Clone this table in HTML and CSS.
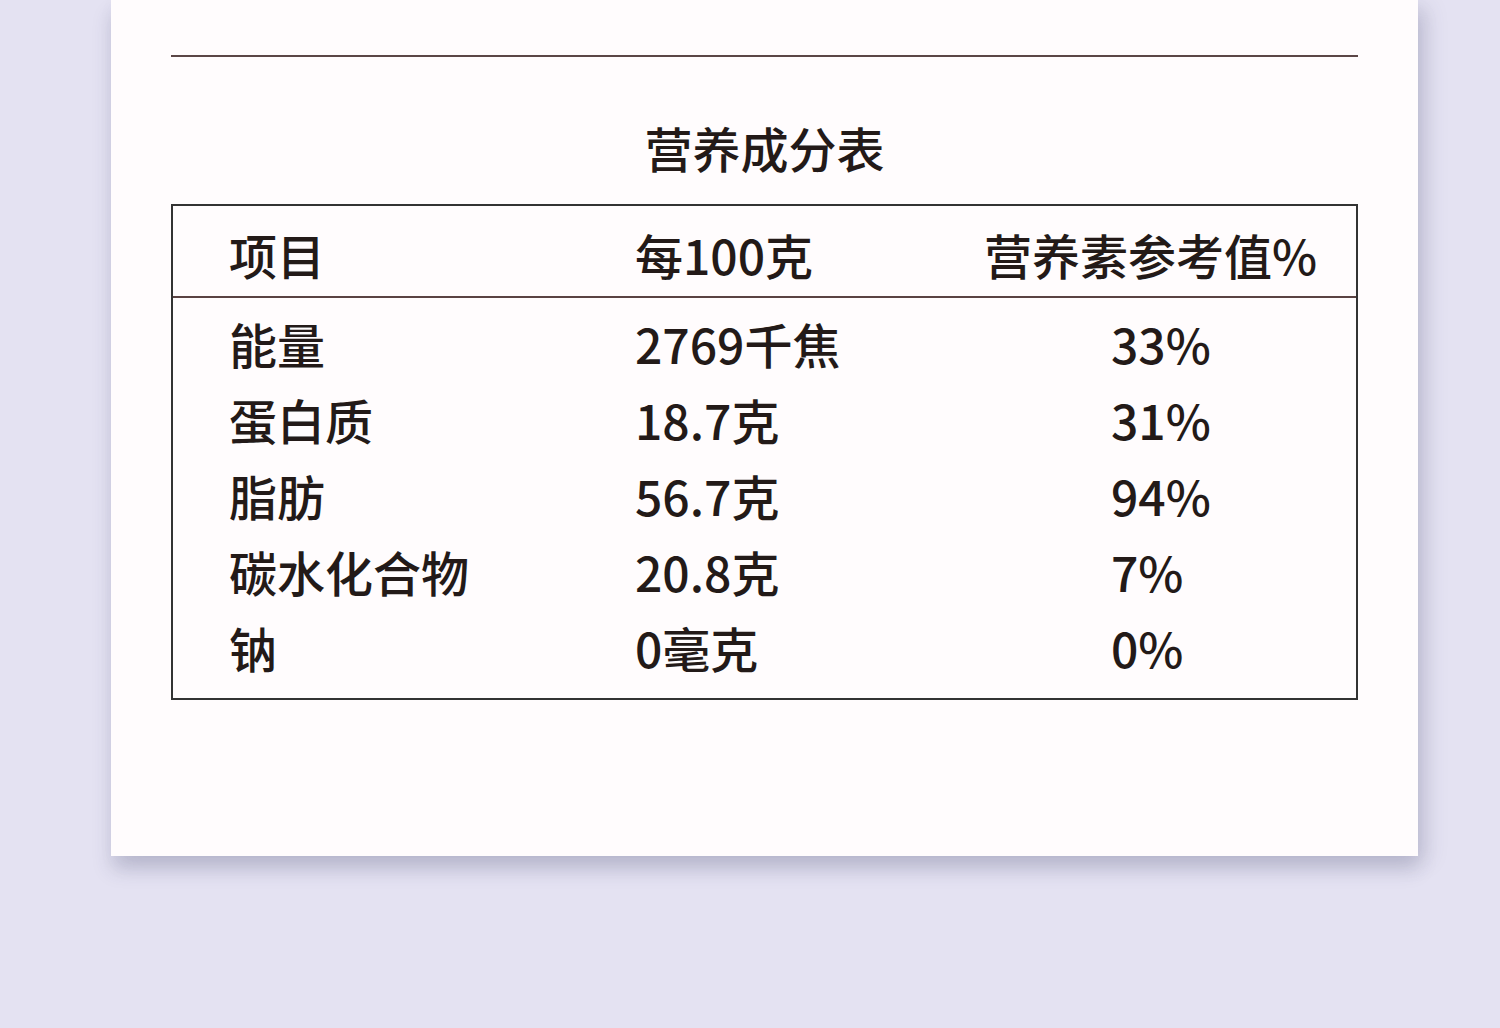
FILE: index.html
```html
<!DOCTYPE html>
<html lang="zh-CN">
<head>
<meta charset="utf-8">
<title>营养成分表</title>
<link rel="stylesheet" href="styles.css">
</head>
<body>
<div class="page">
  <div class="card">
    <div class="rule"></div>
    <h2 class="title">营养成分表</h2>
    <div class="table">
      <div class="row head">
        <div class="c1">项目</div>
        <div class="c2">每100克</div>
        <div class="c3">营养素参考值%</div>
      </div>
      <div class="body">
        <div class="row">
          <div class="c1">能量</div>
          <div class="c2">2769千焦</div>
          <div class="c3 v">33%</div>
        </div>
        <div class="row">
          <div class="c1">蛋白质</div>
          <div class="c2">18.7克</div>
          <div class="c3 v">31%</div>
        </div>
        <div class="row">
          <div class="c1">脂肪</div>
          <div class="c2">56.7克</div>
          <div class="c3 v">94%</div>
        </div>
        <div class="row">
          <div class="c1">碳水化合物</div>
          <div class="c2">20.8克</div>
          <div class="c3 v">7%</div>
        </div>
        <div class="row">
          <div class="c1">钠</div>
          <div class="c2">0毫克</div>
          <div class="c3 v">0%</div>
        </div>
      </div>
    </div>
  </div>
</div>
</body>
</html>
```
FILE: styles.css
```css
html {
  background: #e4e2f2;
}
body {
  margin: 0;
  padding: 0;
  min-height: 1028px;
  font-family: "Noto Sans CJK SC", "Noto Sans", sans-serif;
  color: #231a18;
}
.page {
  padding-left: 111px;
  width: 1307px;
}
.card {
  position: relative;
  background: #fffcfd;
  height: 856px;
  padding: 55px 60px 0 60px;
  box-sizing: border-box;
  box-shadow: 0 14px 18px rgba(50, 55, 95, 0.17), 10px 6px 20px rgba(60, 62, 100, 0.13);
}
.rule {
  height: 2px;
  background: #5b4646;
}
.title {
  margin: 0;
  padding-top: 66px;
  height: 81px;
  font-size: 48px;
  line-height: 48px;
  font-weight: 500;
  text-align: center;
}
.table {
  border: 2px solid #333;
}
.row {
  display: grid;
  grid-template-columns: 406px 349px 1fr;
  padding-left: 56px;
  font-size: 48px;
  line-height: 76px;
  height: 76px;
  font-weight: 500;
}
.row.head {
  height: 92px;
  padding-top: 10px;
  box-sizing: border-box;
  border-bottom: 2px solid #5a4242;
  line-height: 76px;
}
.body {
  padding: 7px 0 13px;
}
.c3.v {
  padding-left: 127px;
}
```
